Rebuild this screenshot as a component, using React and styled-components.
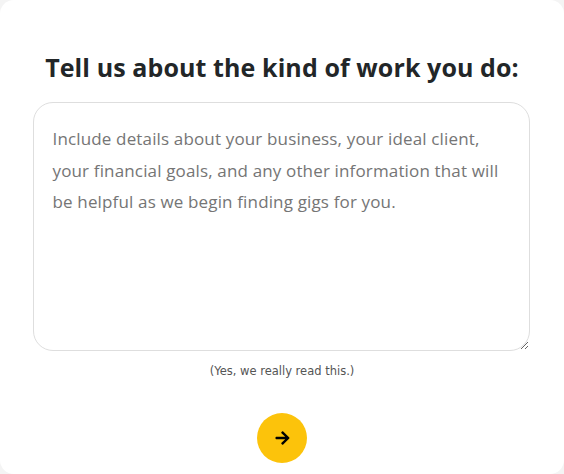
import React, { useState } from "react";
import styled, { createGlobalStyle } from "styled-components";

const GlobalStyle = createGlobalStyle`
  html, body {
    margin: 0;
    padding: 0;
    background: #f4f4f4;
  }
`;

const Card = styled.div`
  box-sizing: border-box;
  width: 564px;
  height: 474px;
  background: #fff;
  border-radius: 14px;
  display: flex;
  flex-direction: column;
  align-items: center;
  padding-top: 50px;
  font-family: "Open Sans", "Liberation Sans", sans-serif;
`;

const Title = styled.h2`
  margin: 0 0 18px;
  font-size: 25px;
  font-weight: 700;
  color: #222628;
  letter-spacing: 0.1px;
  line-height: 34px;
`;

const TextBox = styled.textarea`
  box-sizing: border-box;
  width: 497px;
  height: 249px;
  margin: 0 0 0 -2px;
  padding: 20px 19px 12px;
  border: 1px solid #dedede;
  border-radius: 20px;
  outline: none;
  resize: vertical;
  font-family: inherit;
  font-size: 17px;
  letter-spacing: 0.15px;
  line-height: 31.5px;
  color: #333;

  &::placeholder {
    color: #757575;
  }
`;

const Note = styled.p`
  margin: 13px 0 0;
  font-family: "DejaVu Sans", Verdana, sans-serif;
  font-size: 11.5px;
  color: #555;
`;

const NextButton = styled.button`
  margin-top: 35px;
  width: 50px;
  height: 50px;
  border: none;
  border-radius: 50%;
  background: #fcc30b;
  display: flex;
  align-items: center;
  justify-content: center;
  cursor: pointer;
  padding: 0;
`;

const placeholder =
  "Include details about your business, your ideal client,\nyour financial goals, and any other information that will\nbe helpful as we begin finding gigs for you.";

export default function App() {
  const [value, setValue] = useState("");

  return (
    <>
      <GlobalStyle />
      <Card>
        <Title>Tell us about the kind of work you do:</Title>
        <TextBox
          value={value}
          placeholder={placeholder}
          onChange={(e) => setValue(e.target.value)}
        />
        <Note>(Yes, we really read this.)</Note>
        <NextButton type="button" aria-label="Next">
          <svg width="17" height="16" viewBox="0 0 448 512">
            <path
              fill="#000"
              d="M190.5 66.9l22.2-22.2c9.4-9.4 24.6-9.4 33.9 0L441 239c9.4 9.4 9.4 24.6 0 33.9L246.6 467.3c-9.4 9.4-24.6 9.4-33.9 0l-22.2-22.2c-9.5-9.5-9.3-25 .4-34.3L311.4 296H24c-13.3 0-24-10.7-24-24v-32c0-13.3 10.7-24 24-24h287.4L190.9 101.2c-9.8-9.3-10-24.8-.4-34.3z"
            />
          </svg>
        </NextButton>
      </Card>
    </>
  );
}
